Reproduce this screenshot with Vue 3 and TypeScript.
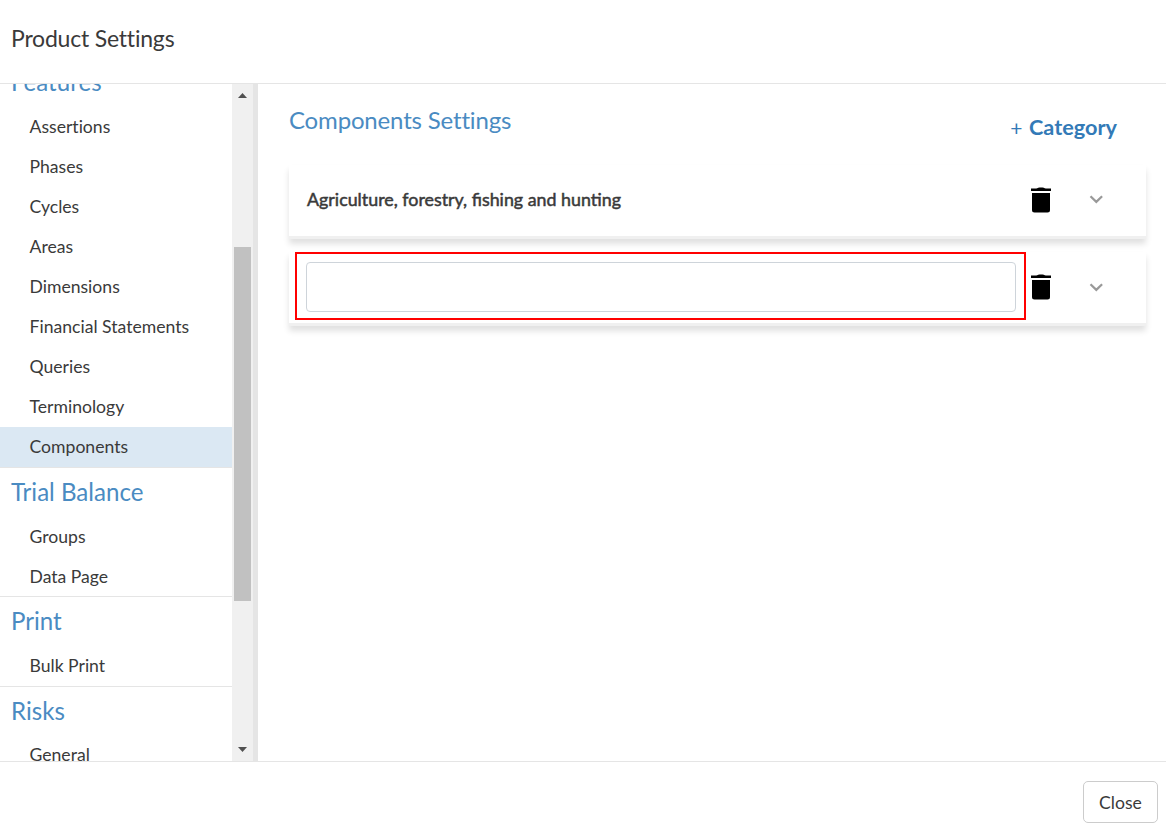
<script setup lang="ts">
interface Section {
  title: string
  items: string[]
}

const sections: Section[] = [
  {
    title: 'Features',
    items: ['Assertions', 'Phases', 'Cycles', 'Areas', 'Dimensions', 'Financial Statements', 'Queries', 'Terminology', 'Components'],
  },
  { title: 'Trial Balance', items: ['Groups', 'Data Page'] },
  { title: 'Print', items: ['Bulk Print'] },
  { title: 'Risks', items: ['General'] },
]

const active = 'Components'
const categories: string[] = ['Agriculture, forestry, fishing and hunting', '']
</script>

<template>
  <div class="dialog">
    <header class="header"><h1>Product Settings</h1></header>
    <div class="body">
      <nav class="sidebar">
        <div class="sections">
          <section v-for="s in sections" :key="s.title" class="section">
            <h2>{{ s.title }}</h2>
            <div v-for="item in s.items" :key="item" class="item" :class="{ active: item === active }">
              <span>{{ item }}</span>
            </div>
          </section>
        </div>
        <div class="scrollbar">
          <svg class="arrow" width="9" height="5" viewBox="0 0 9 5"><path d="M0 5 4.5 0 9 5z" fill="#505050" /></svg>
          <div class="track"><div class="thumb"></div></div>
          <svg class="arrow" width="9" height="5" viewBox="0 0 9 5"><path d="M0 0 4.5 5 9 0z" fill="#505050" /></svg>
        </div>
      </nav>
      <main class="content">
        <div class="top">
          <h2 class="title">Components Settings</h2>
          <a class="add"><span class="plus">+</span><span class="add-label">Category</span></a>
        </div>
        <div v-for="(c, i) in categories" :key="i" class="card">
          <span v-if="c" class="name">{{ c }}</span>
          <div v-else class="highlight"><input class="field" type="text" /></div>
          <svg class="trash" width="20" height="26" viewBox="0 0 20 26">
            <path d="M0 1.600h5.200C6.500.800 7.800.400 10 .400s3.500.400 4.800 1.200H20V4H0z" />
            <path d="M1 6h18v17a2.500 2.500 0 0 1-2.500 2.500h-13A2.500 2.500 0 0 1 1 23z" />
          </svg>
          <svg class="chevron" width="14" height="9" viewBox="0 0 14 9">
            <path d="M1.500 1.200 7.300 6.900 13.100 1.200" fill="none" stroke="#999" stroke-width="2.200" />
          </svg>
        </div>
      </main>
    </div>
    <footer class="footer"><button class="close" type="button">Close</button></footer>
  </div>
</template>

<style>
body {
  margin: 0;
  background: #fff;
}
</style>

<style scoped>
.dialog {
  display: flex;
  flex-direction: column;
  width: 1166px;
  height: 834px;
  overflow: hidden;
  box-sizing: border-box;
  font-family: Lato, "Liberation Sans", sans-serif;
  color: #3a3a3a;
}
.dialog * {
  box-sizing: border-box;
}
h1,
h2 {
  margin: 0;
  font-weight: 400;
  font-variant-ligatures: none;
}
.header {
  height: 84px;
  flex: none;
  border-bottom: 1px solid #e5e5e5;
  padding: 21px 11px 0;
}
h1 {
  font-size: 23px;
  line-height: 34px;
  letter-spacing: -0.2px;
}
.body {
  display: flex;
  height: 677px;
  flex: none;
}
.sidebar {
  display: flex;
  width: 258px;
  border-right: 5px solid #e5e5e5;
  overflow: hidden;
}
.sections {
  width: 232px;
  height: 677px;
  overflow: hidden;
}
.section {
  border-bottom: 1px solid #e5e5e5;
}
.section:first-child {
  margin-top: -25.6px;
}
.section:nth-child(2) {
  height: 129px;
}
.section h2 {
  height: 48.6px;
  padding-left: 11px;
  font-size: 24.1px;
  line-height: 48px;
  color: #4a8bc2;
}
.item {
  height: 40px;
  padding-left: 29.5px;
  font-size: 17.6px;
  line-height: 40px;
  font-variant-ligatures: none;
}
.item.active {
  background: #dbe8f3;
}
.scrollbar {
  display: flex;
  flex-direction: column;
  align-items: center;
  width: 21px;
  padding: 9px 0 9px;
  background: #f0f0f0;
}
.arrow {
  flex: none;
}
.track {
  flex: 1;
  width: 17px;
  padding-top: 149px;
}
.thumb {
  height: 354px;
  background: #c1c1c1;
}
.content {
  flex: 1;
  padding: 0 20px 0 31px;
}
.top {
  display: flex;
  justify-content: space-between;
  height: 81px;
  padding-right: 29px;
}
.title {
  padding-top: 19px;
  font-size: 24px;
  line-height: 34px;
  letter-spacing: -0.17px;
  color: #4a8bc2;
}
.add {
  display: flex;
  gap: 6.5px;
  padding-top: 26px;
  line-height: 34px;
  color: #337ab7;
}
.plus {
  padding-top: 1px;
  font-size: 21px;
}
.add-label {
  font-size: 21.7px;
  font-weight: 700;
}
.card {
  display: flex;
  align-items: center;
  height: 74px;
  margin-bottom: 13px;
  padding: 0 43px 3px 6px;
  border-bottom: 3px solid #f0f0f0;
  background: #fff;
  box-shadow: 0 5px 6px rgba(0, 0, 0, 0.12);
}
.name {
  width: 731px;
  padding: 0 0 1px 12px;
  font-size: 17.85px;
  font-weight: 400;
  -webkit-text-stroke: 0.5px #3a3a3a;
}
.highlight {
  width: 731px;
  height: 68px;
  padding: 8px;
  border: 2px solid #f00;
}
.field {
  display: block;
  width: 710px;
  height: 50px;
  margin-left: 1px;
  border: 1px solid #ced4da;
  border-radius: 4px;
  background: #fff;
  outline: none;
}
.trash {
  flex: none;
  margin: 2px 0 0 5px;
}
.chevron {
  flex: none;
  margin-left: auto;
}
.card:last-child .chevron {
  margin-top: 2px;
}
.footer {
  display: flex;
  justify-content: flex-end;
  flex: 1;
  padding: 19px 8px 0 0;
  border-top: 1px solid #e5e5e5;
}
.close {
  width: 75px;
  height: 42px;
  padding: 0;
  border: 1px solid #ccc;
  border-radius: 5px;
  background: #fff;
  color: #3a3a3a;
  font: 400 17.6px Lato, "Liberation Sans", sans-serif;
}
</style>
